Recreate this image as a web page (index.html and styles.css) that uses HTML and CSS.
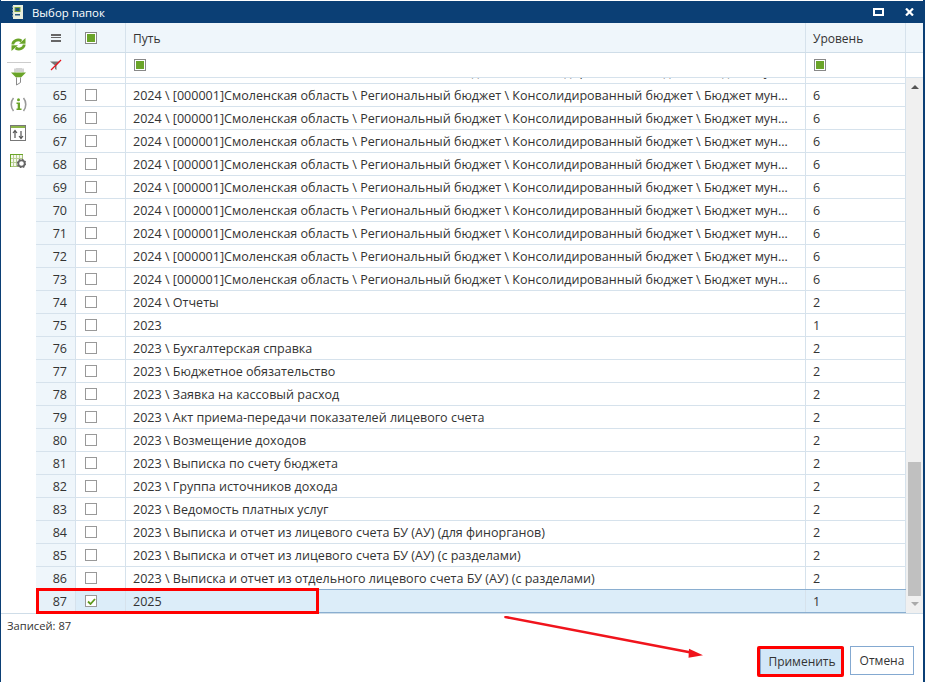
FILE: index.html
```html
<!DOCTYPE html>
<html lang="ru">
<head>
<meta charset="utf-8">
<title>Выбор папок</title>
<link rel="stylesheet" href="styles.css">
</head>
<body>
<div class="window">
  <div class="titlebar">
    <svg class="app-icon" width="11" height="14" viewBox="0 0 11 14"><rect x="1" y="0" width="10" height="14" fill="#e9eedd"/><path d="M0 2h2M0 5h2M0 8h2M0 11h2" stroke="#c9d2b8"/><rect x="3" y="2.500" width="5" height="4" fill="#23557f" stroke="#7ea63c"/><rect x="3" y="9" width="5" height="1.500" fill="#23557f"/></svg>
    <span class="title">Выбор папок</span>
    <span class="spacer"></span>
    <svg class="win-btn" width="11" height="8" viewBox="0 0 11 8"><rect x="1" y="1" width="9" height="6" fill="none" stroke="#fff" stroke-width="2"/></svg>
    <svg class="win-btn close" width="9" height="8" viewBox="0 0 9 8"><path d="M1 0.500l7 7M8 0.500l-7 7" stroke="#fff" stroke-width="2.200"/></svg>
  </div>
  <div class="body">
    <div class="toolbar">
      <svg class="tool t-refresh" width="15" height="13" viewBox="0 0 15 13"><path d="M1.800 6.500C2 3 6.500 0.500 10.500 3" fill="none" stroke="#6aa428" stroke-width="2.800"/><path d="M8 5.800h6.500V0z" fill="#6aa428"/><path d="M13.200 6.500C13 10 8.500 12.500 4.500 10" fill="none" stroke="#6aa428" stroke-width="2.800"/><path d="M7 7.200H.500V13z" fill="#6aa428"/></svg>
      <div class="tool-sep"></div>
      <svg class="tool t-filter" width="15" height="18" viewBox="0 0 15 18"><path d="M4 0.500v4M6 0v4M8 0v4M10 0v4M12 0.500v4" stroke="#a8a8a8" stroke-width="1"/><path d="M0 4.500h15L10 9.500H5z" fill="#6aa428"/><path d="M5.500 9.500v7.500l4-2.500V9.500" fill="#fff" stroke="#8a8a8a"/></svg>
      <svg class="tool t-info" width="17" height="15" viewBox="0 0 17 15"><path d="M3.500 1C0.500 4.500 0.500 10.500 3.500 14M13.500 1c3 3.500 3 9.500 0 13" fill="none" stroke="#999" stroke-width="1.600"/><circle cx="8.500" cy="2.800" r="1.500" fill="#6aa428"/><path d="M6.500 5.500h3.500V11.500H11.500V13H6.500v-1.500h1.200V7H6.500z" fill="#6aa428"/></svg>
      <svg class="tool t-sort" width="16" height="16" viewBox="0 0 16 16"><rect x="0.500" y="0.500" width="15" height="15" fill="#fff" stroke="#777"/><rect x="1" y="1" width="14" height="2" fill="#8cb54a"/><path d="M5 13V6M3 8l2-2.500L7 8M11 6v7M9 11l2 2.500L13 11" fill="none" stroke="#555" stroke-width="1.200"/></svg>
      <svg class="tool t-grid" width="16" height="14" viewBox="0 0 16 14"><rect x="0.500" y="0.500" width="12" height="12" fill="#f4f7ec" stroke="#a9c47c"/><path d="M3.500 1v11M6.500 1v11M9.500 1v11M1 4.500h11M1 8.500h11" stroke="#b9cf94"/><path d="M0.500 0v13" stroke="#6aa428"/><path d="M0 0.500h13" stroke="#6aa428"/><circle cx="11.500" cy="9.500" r="3.200" fill="#fff" stroke="#666" stroke-width="1.800"/><circle cx="11.500" cy="9.500" r="4.200" fill="none" stroke="#666" stroke-width="1.200" stroke-dasharray="1.500 1.800"/></svg>
    </div>
    <div class="grid">
      <div class="head-row">
        <div class="cell c-num"><span class="menu"></span></div>
        <div class="cell c-chk"><span class="box on"></span></div>
        <div class="cell c-path">Путь</div>
        <div class="cell c-lvl">Уровень</div>
        <div class="cell c-end"></div>
      </div>
      <div class="filter-row">
        <div class="cell c-num"><svg width="12" height="12" viewBox="0 0 12 12"><path d="M0 2.500h10L6.500 6.500V11L5 10V6.500z" fill="#777"/><path d="M1 11L11 1" stroke="#e8121a" stroke-width="1.200"/></svg></div>
        <div class="cell c-chk"></div>
        <div class="cell c-path"><span class="box on"></span></div>
        <div class="cell c-lvl"><span class="box on"></span></div>
        <div class="cell c-end"></div>
      </div>
      <div class="rows-wrap">
        <div class="rows">
          <div class="row clip">
            <div class="cell c-num"></div><div class="cell c-chk"></div><div class="cell c-path"><span class="txt">2024 \ [000001]Смоленская область \ Региональный бюджет \ Консолидированный бюджет \ Бюджет муниципального образования</span></div><div class="cell c-lvl"></div>
          </div>
          <div class="row"><div class="cell c-num">65</div><div class="cell c-chk"><span class="box"></span></div><div class="cell c-path"><span class="txt">2024 \ [000001]Смоленская область \ Региональный бюджет \ Консолидированный бюджет \ Бюджет муниципального образования</span></div><div class="cell c-lvl">6</div></div>
          <div class="row"><div class="cell c-num">66</div><div class="cell c-chk"><span class="box"></span></div><div class="cell c-path"><span class="txt">2024 \ [000001]Смоленская область \ Региональный бюджет \ Консолидированный бюджет \ Бюджет муниципального образования</span></div><div class="cell c-lvl">6</div></div>
          <div class="row"><div class="cell c-num">67</div><div class="cell c-chk"><span class="box"></span></div><div class="cell c-path"><span class="txt">2024 \ [000001]Смоленская область \ Региональный бюджет \ Консолидированный бюджет \ Бюджет муниципального образования</span></div><div class="cell c-lvl">6</div></div>
          <div class="row"><div class="cell c-num">68</div><div class="cell c-chk"><span class="box"></span></div><div class="cell c-path"><span class="txt">2024 \ [000001]Смоленская область \ Региональный бюджет \ Консолидированный бюджет \ Бюджет муниципального образования</span></div><div class="cell c-lvl">6</div></div>
          <div class="row"><div class="cell c-num">69</div><div class="cell c-chk"><span class="box"></span></div><div class="cell c-path"><span class="txt">2024 \ [000001]Смоленская область \ Региональный бюджет \ Консолидированный бюджет \ Бюджет муниципального образования</span></div><div class="cell c-lvl">6</div></div>
          <div class="row"><div class="cell c-num">70</div><div class="cell c-chk"><span class="box"></span></div><div class="cell c-path"><span class="txt">2024 \ [000001]Смоленская область \ Региональный бюджет \ Консолидированный бюджет \ Бюджет муниципального образования</span></div><div class="cell c-lvl">6</div></div>
          <div class="row"><div class="cell c-num">71</div><div class="cell c-chk"><span class="box"></span></div><div class="cell c-path"><span class="txt">2024 \ [000001]Смоленская область \ Региональный бюджет \ Консолидированный бюджет \ Бюджет муниципального образования</span></div><div class="cell c-lvl">6</div></div>
          <div class="row"><div class="cell c-num">72</div><div class="cell c-chk"><span class="box"></span></div><div class="cell c-path"><span class="txt">2024 \ [000001]Смоленская область \ Региональный бюджет \ Консолидированный бюджет \ Бюджет муниципального образования</span></div><div class="cell c-lvl">6</div></div>
          <div class="row"><div class="cell c-num">73</div><div class="cell c-chk"><span class="box"></span></div><div class="cell c-path"><span class="txt">2024 \ [000001]Смоленская область \ Региональный бюджет \ Консолидированный бюджет \ Бюджет муниципального образования</span></div><div class="cell c-lvl">6</div></div>
          <div class="row"><div class="cell c-num">74</div><div class="cell c-chk"><span class="box"></span></div><div class="cell c-path"><span class="txt">2024 \ Отчеты</span></div><div class="cell c-lvl">2</div></div>
          <div class="row"><div class="cell c-num">75</div><div class="cell c-chk"><span class="box"></span></div><div class="cell c-path"><span class="txt">2023</span></div><div class="cell c-lvl">1</div></div>
          <div class="row"><div class="cell c-num">76</div><div class="cell c-chk"><span class="box"></span></div><div class="cell c-path"><span class="txt">2023 \ Бухгалтерская справка</span></div><div class="cell c-lvl">2</div></div>
          <div class="row"><div class="cell c-num">77</div><div class="cell c-chk"><span class="box"></span></div><div class="cell c-path"><span class="txt">2023 \ Бюджетное обязательство</span></div><div class="cell c-lvl">2</div></div>
          <div class="row"><div class="cell c-num">78</div><div class="cell c-chk"><span class="box"></span></div><div class="cell c-path"><span class="txt">2023 \ Заявка на кассовый расход</span></div><div class="cell c-lvl">2</div></div>
          <div class="row"><div class="cell c-num">79</div><div class="cell c-chk"><span class="box"></span></div><div class="cell c-path"><span class="txt">2023 \ Акт приема-передачи показателей лицевого счета</span></div><div class="cell c-lvl">2</div></div>
          <div class="row"><div class="cell c-num">80</div><div class="cell c-chk"><span class="box"></span></div><div class="cell c-path"><span class="txt">2023 \ Возмещение доходов</span></div><div class="cell c-lvl">2</div></div>
          <div class="row"><div class="cell c-num">81</div><div class="cell c-chk"><span class="box"></span></div><div class="cell c-path"><span class="txt">2023 \ Выписка по счету бюджета</span></div><div class="cell c-lvl">2</div></div>
          <div class="row"><div class="cell c-num">82</div><div class="cell c-chk"><span class="box"></span></div><div class="cell c-path"><span class="txt">2023 \ Группа источников дохода</span></div><div class="cell c-lvl">2</div></div>
          <div class="row"><div class="cell c-num">83</div><div class="cell c-chk"><span class="box"></span></div><div class="cell c-path"><span class="txt">2023 \ Ведомость платных услуг</span></div><div class="cell c-lvl">2</div></div>
          <div class="row"><div class="cell c-num">84</div><div class="cell c-chk"><span class="box"></span></div><div class="cell c-path"><span class="txt">2023 \ Выписка и отчет из лицевого счета БУ (АУ) (для финорганов)</span></div><div class="cell c-lvl">2</div></div>
          <div class="row"><div class="cell c-num">85</div><div class="cell c-chk"><span class="box"></span></div><div class="cell c-path"><span class="txt">2023 \ Выписка и отчет из лицевого счета БУ (АУ) (с разделами)</span></div><div class="cell c-lvl">2</div></div>
          <div class="row"><div class="cell c-num">86</div><div class="cell c-chk"><span class="box"></span></div><div class="cell c-path"><span class="txt">2023 \ Выписка и отчет из отдельного лицевого счета БУ (АУ) (с разделами)</span></div><div class="cell c-lvl">2</div></div>
          <div class="row selected"><div class="cell c-num">87</div><div class="cell c-chk"><span class="box"><svg width="9" height="7" viewBox="0 0 9 7"><path d="M1 3.500l2.500 2.500 4.500-5" fill="none" stroke="#5f9a1e" stroke-width="1.800"/></svg></span></div><div class="cell c-path"><span class="txt">2025</span></div><div class="cell c-lvl">1</div></div>
        </div>
        <div class="scrollbar">
          <span class="arrow up"></span>
          <div class="track"><div class="thumb"></div></div>
          <span class="arrow down"></span>
        </div>
      </div>
    </div>
  </div>
  <div class="footer">
    <div class="records">Записей: 87</div>
    <div class="buttons">
      <button class="btn primary">Применить</button>
      <button class="btn">Отмена</button>
    </div>
  </div>
  <div class="mark mark-row"></div>
  <div class="mark mark-btn"></div>
  <svg class="arrow-mark" width="200" height="44" viewBox="0 0 200 44"><path d="M1.500 1L187 36.500" stroke="#f0141c" stroke-width="2.500" stroke-linecap="round"/><path d="M199 39.300L185 32.700l-.5 9z" fill="#f0141c"/></svg>
</div>
</body>
</html>
```
FILE: styles.css
```css
* { box-sizing: border-box; }
html, body { margin: 0; padding: 0; background: #fff; }
body { width: 925px; height: 682px; overflow: hidden; font-family: "Open Sans", "Noto Sans", sans-serif; font-size: 12.56px; color: #333; }
.window { position: relative; width: 925px; height: 682px; display: flex; flex-direction: column; border-left: 1px solid #0b3f75; border-right: 2px solid #0b3f75; padding-top: 1px; }
.titlebar { height: 22px; background: #0b3f75; color: #fff; display: flex; align-items: center; padding: 0 8px 0 12px; margin: 0 -2px 0 -1px; flex: none; }
.app-icon { margin-right: 9px; }
.title { font-size: 11.4px; }
.spacer { flex: 1; }
.win-btn { margin-left: 21px; }
.win-btn.close { margin-right: 3px; }
.body { display: flex; height: 591px; flex: none; border-bottom: 1px solid #cfdde8; }
.toolbar { width: 35px; flex: none; display: flex; flex-direction: column; align-items: flex-start; padding: 15px 0 0 9px; }
.tool { flex: none; }
.t-refresh { margin-left: 1px; }
.tool-sep { width: 24px; height: 1px; background: #ccc; margin: 11px 0 5px -3px; }
.t-filter { margin-left: 1px; }
.t-info { margin: 11px 0 0 0; }
.t-sort { margin-top: 13px; }
.t-grid { margin-top: 13px; }
.grid { flex: 1; display: flex; flex-direction: column; min-width: 0; }
.head-row, .filter-row { display: flex; flex: none; }
.head-row { height: 30px; background: #eff6fb; border-bottom: 1px solid #cfdde8; font-size: 12px; }
.head-row .c-path, .head-row .c-lvl { padding-top: 1px; }
.filter-row { height: 25px; border-bottom: 1px solid #d6e2ec; }
.cell { display: flex; align-items: center; border-right: 1px solid #d6e2ec; flex: none; height: 100%; }
.c-num { width: 40px; background: #eff6fb; justify-content: flex-end; padding-right: 8px; }
.head-row .c-num, .filter-row .c-num { justify-content: center; padding-right: 0; padding-left: 1px; }
.c-chk { width: 50px; padding-left: 9px; }
.c-path { width: 680px; padding-left: 7px; min-width: 0; }
.c-lvl { width: 100px; padding-left: 7px; }
.c-end { flex: 1; border-right: 0; }
.filter-row .c-path { padding-left: 8px; }
.filter-row .c-lvl { padding-left: 8px; }
.menu { width: 10px; height: 8px; border-top: 2px solid #666; border-bottom: 2px solid #666; position: relative; }
.menu::after { content: ""; display: block; height: 1px; margin-top: 1px; background: #666; }
.box { width: 12px; height: 12px; border: 1px solid #999; background: #fff; display: flex; align-items: center; justify-content: center; flex: none; }
.box.on { border-color: #888; }
.box.on::after { content: ""; width: 8px; height: 8px; background: #6aa428; }
.rows-wrap { flex: 1; display: flex; min-height: 0; }
.rows { width: 870px; flex: none; display: flex; flex-direction: column; }
.row { height: 23px; display: flex; flex: none; border-bottom: 1px solid #d6e2ec; }
.row.clip { height: 6px; overflow: hidden; }
.row.clip .cell { align-items: flex-start; overflow: hidden; }
.row.clip .txt { margin-top: -15px; }
.txt { white-space: nowrap; overflow: hidden; text-overflow: ellipsis; display: block; width: 100%; padding-right: 12px; }
.row.selected { height: 24px; background: #dcedf9; border-top: 1px solid #8aaed0; border-bottom: 1px solid #8aaed0; margin-top: -1px; }
.row.selected .c-num { background: #e6f1f9; }
.scrollbar { flex: 1; background: #f0f0f0; display: flex; flex-direction: column; align-items: center; }
.track { flex: 1; width: 100%; display: flex; flex-direction: column; justify-content: flex-end; }
.thumb { height: 134px; margin: 0 2px; background: #c0c0c0; }
.arrow { width: 0; height: 0; border-left: 4px solid transparent; border-right: 4px solid transparent; flex: none; }
.arrow.up { border-bottom: 4px solid #555; margin: 7px 0 6px; }
.arrow.down { border-top: 4px solid #aaa; margin: 6px 0 7px; }
.footer { flex: 1; display: flex; flex-direction: column; }
.records { padding: 4px 0 0 6px; font-size: 11.2px; line-height: 16px; }
.buttons { display: flex; gap: 6px; justify-content: flex-end; padding: 12px 9px 0 0; }
.btn { height: 29px; background: #fff; border: 1px solid #84a9d1; font-family: inherit; font-size: 12px; color: #333; padding: 0; width: 64px; }
.btn.primary { width: 84px; background: #d2e7f8; height: 28px; margin-top: 1px; }
.mark { position: absolute; border: 3px solid #f00; pointer-events: none; }
.mark-row { left: 35px; top: 588px; width: 283px; height: 26px; }
.mark-btn { left: 756px; top: 646px; width: 87px; height: 31px; border-radius: 2px; }
.arrow-mark { position: absolute; left: 503px; top: 616px; }
```
